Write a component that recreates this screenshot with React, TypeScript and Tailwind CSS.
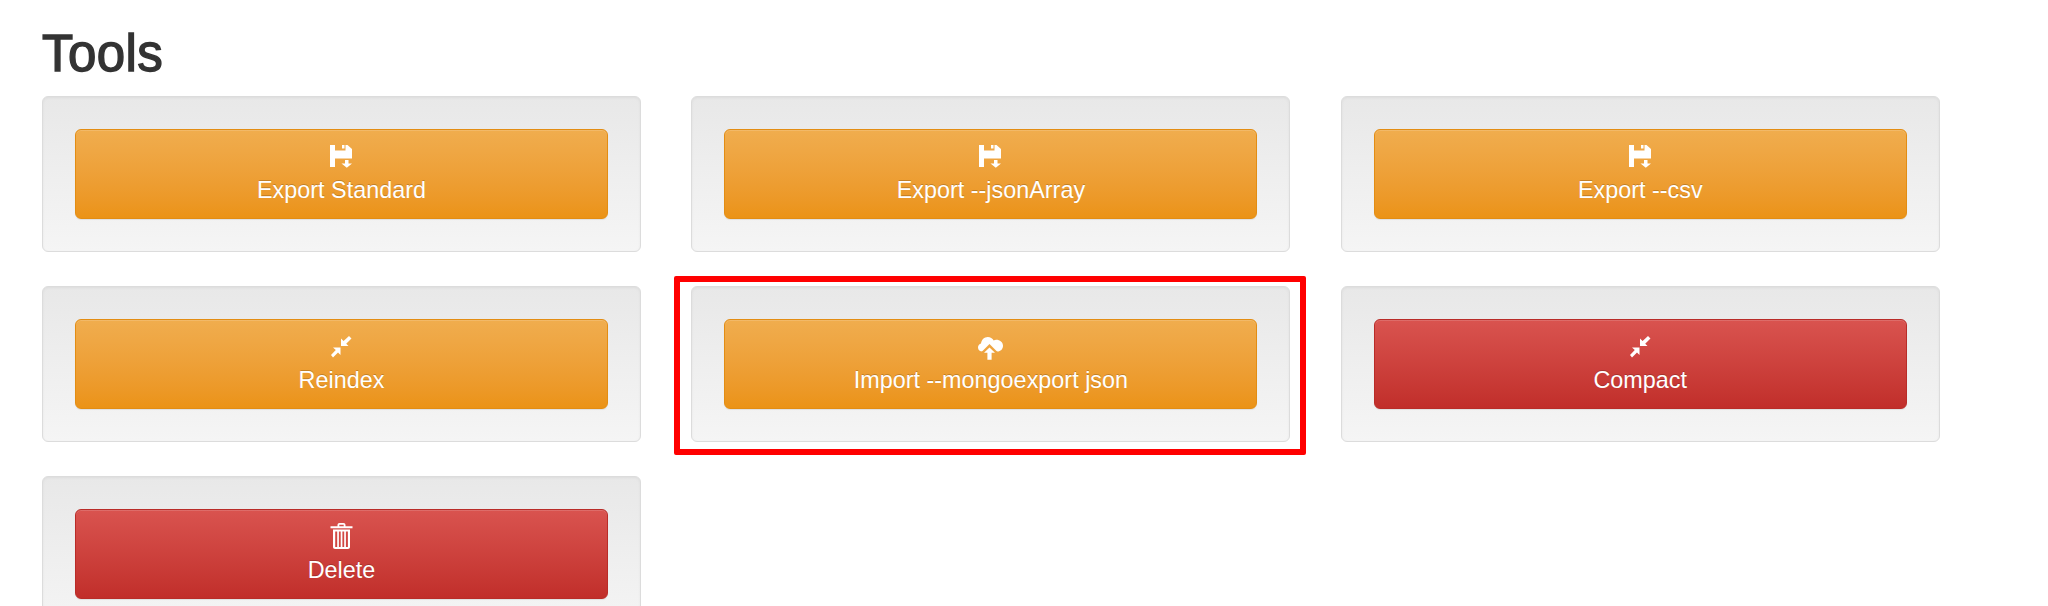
import type { ReactNode } from "react";

function FloppySave() {
  return (
    <svg width="23" height="23" viewBox="0 0 23 23" fill="currentColor">
      <path d="M0 0H5V5.5H15.5V0H17.5L22 4V13.5H5V22H0Z" />
      <path d="M12 0H14.5V3.5H12Z" />
      <path d="M15 15H18.5V18.5H22L16.8 22.8L11.5 18.5H15Z" />
    </svg>
  );
}

function ResizeSmall() {
  return (
    <svg width="23" height="23" viewBox="0 0 23 23" fill="currentColor">
      <path d="M11 11V3.5L13.6 6.1L19 1L21.5 3.5L16.2 8.7L18.5 11Z" />
      <path d="M10.5 12.5V20L8 17.5L3 22.5L1 20L5.8 14.9L3 12.5Z" />
    </svg>
  );
}

function CloudUpload() {
  return (
    <svg className="mt-[5px]" width="25" height="24" viewBox="0 0 25 24" fill="currentColor">
      <mask id="cloud-cut">
        <rect width="25" height="24" fill="white" />
        <path d="M11.5 7L20.5 16H2.5Z" fill="black" />
      </mask>
      <path
        mask="url(#cloud-cut)"
        d="M4.5 14.5C2 14.5 0 12.8 0 10.4C0 8.4 1.3 7 3 6.5C3.4 2.8 6.3 0 9.8 0C12.3 0 14.5 1.3 15.7 3.4C16.5 3 17.3 2.8 18.2 2.8C21.9 2.8 25 5.3 25 8.7C25 12 22.5 14.5 19.4 14.5Z"
      />
      <path d="M11.5 10.5L17 15.8H13.6V22.8H9.4V15.8H6Z" />
    </svg>
  );
}

function Trash() {
  return (
    <svg width="23" height="26" viewBox="0 0 23 26" fill="currentColor">
      <path
        fillRule="evenodd"
        d="M7.5 3.2V2C7.5 0.8 8.3 0 9.5 0H13.5C14.7 0 15.5 0.8 15.5 2V3.2H22.5V5.2H0.5V3.2ZM9.3 3.2H13.7V1.8H9.3Z"
      />
      <path
        fillRule="evenodd"
        d="M3 6.5H20V24C20 25.1 19.1 26 18 26H5C3.9 26 3 25.1 3 24ZM5.2 8.5V24H7.2V8.5ZM8.9 8.5V24H10.7V8.5ZM12.4 8.5V24H14.2V8.5ZM15.9 8.5V24H17.9V8.5Z"
      />
    </svg>
  );
}

interface ToolProps {
  label: string;
  icon: ReactNode;
  danger?: boolean;
  highlighted?: boolean;
}

function Tool({ label, icon, danger, highlighted }: ToolProps) {
  return (
    <div className="relative h-[156px] rounded-[6px] border border-[#dcdcdc] bg-linear-to-b from-[#e8e8e8] to-[#f5f5f5] p-[32px] shadow-[inset_0_1px_3px_rgba(0,0,0,0.05)]">
      <button
        className={
          danger
            ? "flex h-[90px] w-full flex-col items-center rounded-[6px] border border-[#b92c28] bg-linear-to-b from-[#d9534f] to-[#c12e2a] text-white shadow-[inset_0_1px_0_rgba(255,255,255,0.15),0_1px_1px_rgba(0,0,0,0.075)] [text-shadow:0_-1px_0_rgba(0,0,0,0.2)]"
            : "flex h-[90px] w-full flex-col items-center rounded-[6px] border border-[#e38d13] bg-linear-to-b from-[#f0ad4e] to-[#eb9316] text-white shadow-[inset_0_1px_0_rgba(255,255,255,0.15),0_1px_1px_rgba(0,0,0,0.075)] [text-shadow:0_-1px_0_rgba(0,0,0,0.2)]"
        }
      >
        <span className="mt-[14px] flex h-[24px] items-center justify-center">{icon}</span>
        <span className="mt-[6px] text-[23.4px] leading-[32px]">{label}</span>
      </button>
      {highlighted && (
        <div className="absolute -top-[11px] -right-[17px] -bottom-[14px] -left-[18px] rounded-[2px] border-[6px] border-[#ff0000]" />
      )}
    </div>
  );
}

export default function App() {
  return (
    <div className="h-screen overflow-hidden bg-white pl-[42px] font-['Liberation_Sans',Arial,sans-serif] text-[#333]">
      <h1 className="pt-[26px] pb-[15px] text-[51px] leading-[55px] font-medium tracking-[0.4px] [-webkit-text-stroke:1.4px_#333]">
        Tools
      </h1>
      <div className="grid grid-cols-[repeat(3,599px)] gap-x-[50.4px] gap-y-[34px]">
        <Tool label="Export Standard" icon={<FloppySave />} />
        <Tool label="Export --jsonArray" icon={<FloppySave />} />
        <Tool label="Export --csv" icon={<FloppySave />} />
        <Tool label="Reindex" icon={<ResizeSmall />} />
        <Tool label="Import --mongoexport json" icon={<CloudUpload />} highlighted />
        <Tool label="Compact" icon={<ResizeSmall />} danger />
        <Tool label="Delete" icon={<Trash />} danger />
      </div>
    </div>
  );
}
